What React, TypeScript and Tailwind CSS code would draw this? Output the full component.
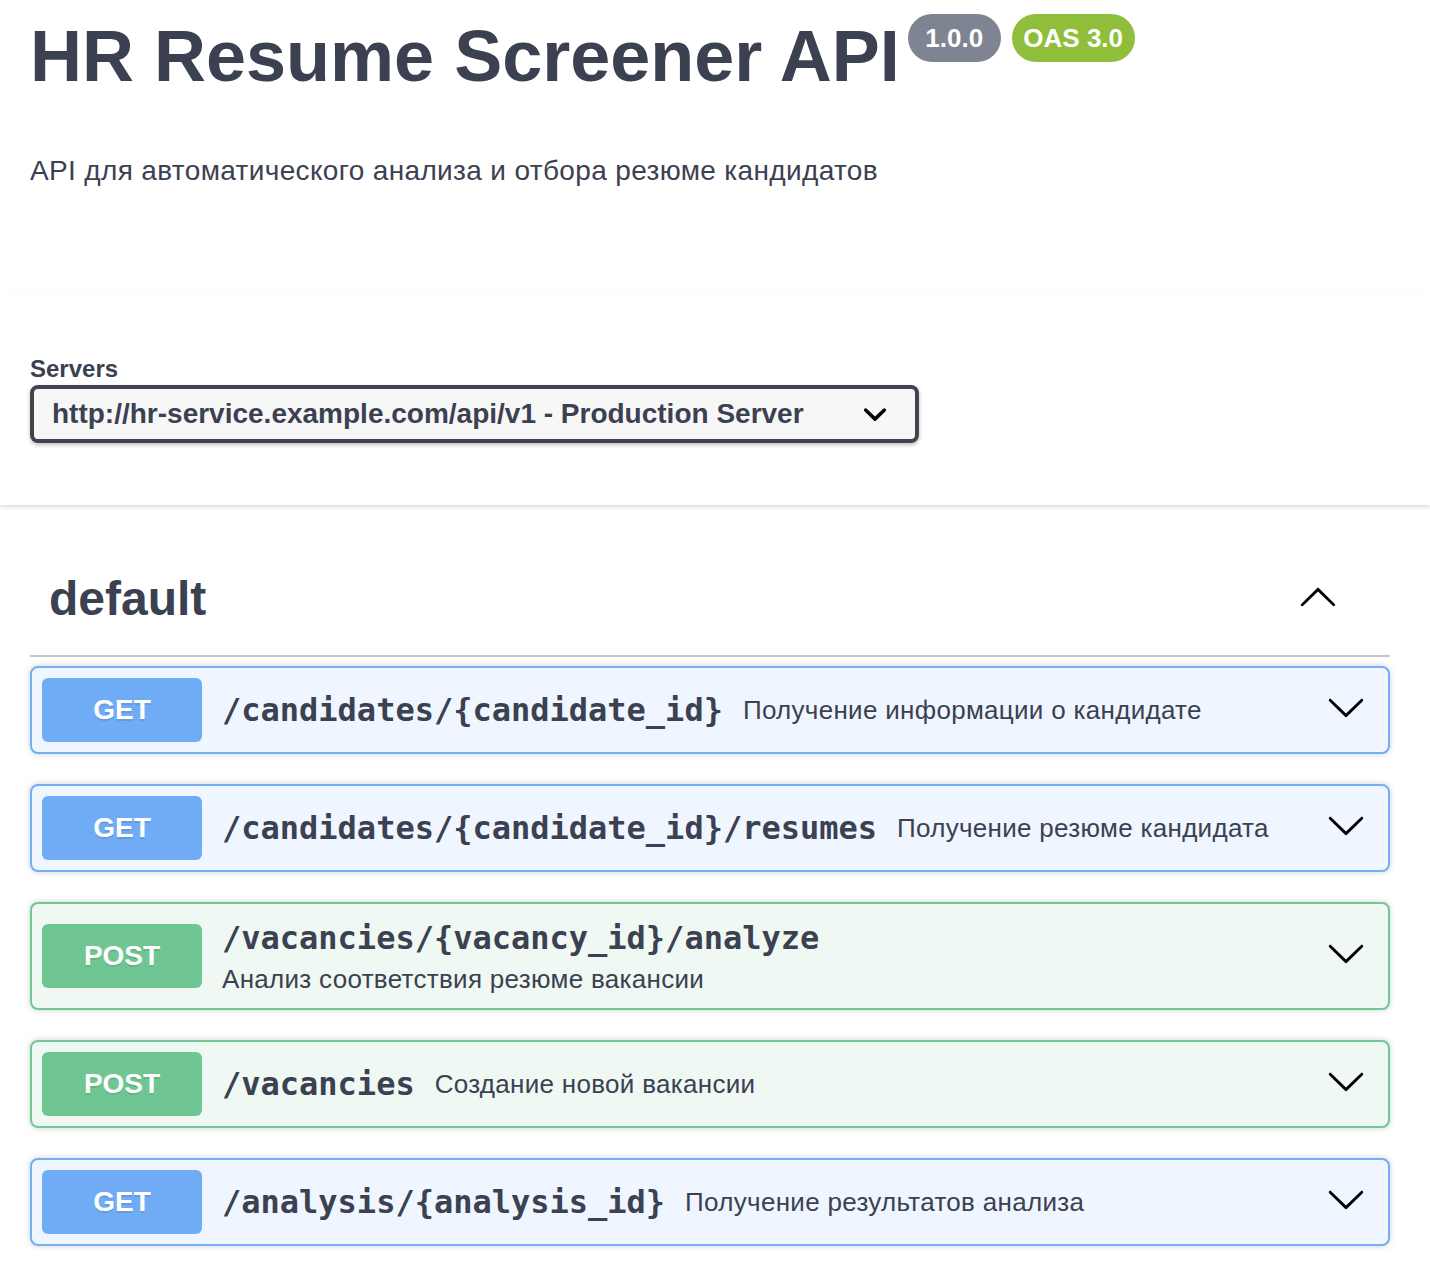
import React from "react";

const DOWN =
  "M17.418 6.109c.272-.268.709-.268.979 0s.271.701 0 .969l-7.908 7.83c-.27.268-.707.268-.979 0l-7.908-7.83c-.27-.268-.27-.701 0-.969.271-.268.709-.268.979 0L10 13.25l7.418-7.141z";
const UP =
  "M 17.418 14.908 C 17.69 15.176 18.127 15.176 18.397 14.908 C 18.667 14.64 18.668 14.207 18.397 13.939 L 10.489 6.109 C 10.219 5.841 9.782 5.841 9.51 6.109 L 1.602 13.939 C 1.332 14.207 1.332 14.64 1.602 14.908 C 1.873 15.176 2.311 15.176 2.581 14.908 L 10 7.767 L 17.418 14.908 Z";
const SELECT_ARROW =
  "M13.418 7.859a.695.695 0 01.978 0 .68.68 0 010 .969l-3.908 3.83a.697.697 0 01-.979 0l-3.908-3.83a.68.68 0 010-.969.695.695 0 01.978 0L10 11l3.418-3.141z";

type Op = {
  method: "GET" | "POST";
  path: string;
  desc: string;
  wrap?: boolean;
};

const ops: Op[] = [
  { method: "GET", path: "/candidates/{candidate_id}", desc: "Получение информации о кандидате" },
  { method: "GET", path: "/candidates/{candidate_id}/resumes", desc: "Получение резюме кандидата" },
  { method: "POST", path: "/vacancies/{vacancy_id}/analyze", desc: "Анализ соответствия резюме вакансии", wrap: true },
  { method: "POST", path: "/vacancies", desc: "Создание новой вакансии" },
  { method: "GET", path: "/analysis/{analysis_id}", desc: "Получение результатов анализа" },
];

function Chevron() {
  return (
    <svg viewBox="0 0 20 20" width="40" height="40" className="mr-[12px] mb-[6px] shrink-0" fill="#000">
      <path d={DOWN} />
    </svg>
  );
}

function OpBlock({ op }: { op: Op }) {
  const isGet = op.method === "GET";
  const box = isGet
    ? "border-[#72aff6] bg-[#eff6ff]"
    : "border-[#72c796] bg-[#eff8f3]";
  const badge = isGet ? "bg-[#70acf6]" : "bg-[#6fc693]";
  return (
    <div
      className={`mb-[30px] flex items-center rounded-[8px] border-2 p-[10px] shadow-[0_0_6px_rgba(0,0,0,0.19)] ${box}`}
    >
      <span
        className={`flex h-[64px] w-[160px] shrink-0 items-center justify-center rounded-[6px] text-[28px] font-bold text-white text-shadow-[0_2px_0_rgba(0,0,0,0.1)] ${badge}`}
      >
        {op.method}
      </span>
      {op.wrap ? (
        <div className="flex h-[84px] flex-1 flex-col justify-center pl-[20px]">
          <span className="font-['DejaVu_Sans_Mono',monospace] text-[32px] font-bold leading-[46px] text-[#3b4151]">
            {op.path}
          </span>
          <span className="text-[26px] leading-[36px] tracking-[0.3px] text-[#3b4151]">{op.desc}</span>
        </div>
      ) : (
        <>
          <span className="px-[20px] font-['DejaVu_Sans_Mono',monospace] text-[32px] font-bold text-[#3b4151]">
            {op.path}
          </span>
          <span className="flex-1 text-[26px] tracking-[0.3px] text-[#3b4151]">{op.desc}</span>
        </>
      )}
      <Chevron />
    </div>
  );
}

export default function App() {
  return (
    <div className="min-h-screen bg-white pb-[2px] font-['Liberation_Sans',Arial,sans-serif] text-[#3b4151]">
      {/* Info */}
      <div className="pl-[30px] pr-[40px]">
        <div className="flex items-start pt-[14px]">
          <h1 className="mt-[6px] text-[72px] font-bold leading-[72px] text-[#3b4151]">
            HR Resume Screener API
          </h1>
          <span className="ml-[8px] flex h-[48px] w-[93px] items-center justify-center rounded-full bg-[#7e8491] text-[26px] font-bold text-white">
            1.0.0
          </span>
          <span className="ml-[11px] flex h-[48px] w-[123px] items-center justify-center rounded-full bg-[#8fbf3a] text-[26px] font-bold text-white">
            OAS 3.0
          </span>
        </div>
        <p className="mt-[59px] text-[28px] leading-[40px] tracking-[0.35px] text-[#3b4151]">
          API для автоматического анализа и отбора резюме кандидатов
        </p>
      </div>

      {/* Servers */}
      <div className="mt-[99px] bg-white pb-[62px] pt-[64px] shadow-[0_2px_4px_0_rgba(0,0,0,0.15)]">
        <div className="pl-[30px]">
          <div className="text-[24px] font-bold leading-[30px] text-[#3b4151]">Servers</div>
          <div className="mt-[1px] flex h-[58px] w-[889px] items-center justify-between rounded-[8px] border-4 border-[#41444e] bg-[#f7f7f7] pl-[18px] shadow-[0_2px_4px_0_rgba(0,0,0,0.25)]">
            <span className="text-[28px] font-bold leading-[50px] text-[#3b4151]">
              http://hr-service.example.com/api/v1 - Production Server
            </span>
            <svg viewBox="0 0 20 20" width="48" height="48" className="mr-[16px] shrink-0" fill="#000">
              <path d={SELECT_ARROW} />
            </svg>
          </div>
        </div>
      </div>

      {/* Operations */}
      <div className="pl-[30px] pr-[40px]">
        <div className="mt-[45px] flex items-center justify-between border-b-2 border-[#c4c6cb] pb-[27px] pl-[19px] pr-[52px] pt-[20px]">
          <h3 className="text-[48px] font-bold leading-[58px] text-[#3b4151]">default</h3>
          <svg viewBox="0 0 20 20" width="40" height="40" className="mb-[6px]" fill="#000">
            <path d={UP} />
          </svg>
        </div>
        <div className="mt-[9px]">
          {ops.map((op) => (
            <OpBlock key={op.path} op={op} />
          ))}
        </div>
      </div>
    </div>
  );
}
